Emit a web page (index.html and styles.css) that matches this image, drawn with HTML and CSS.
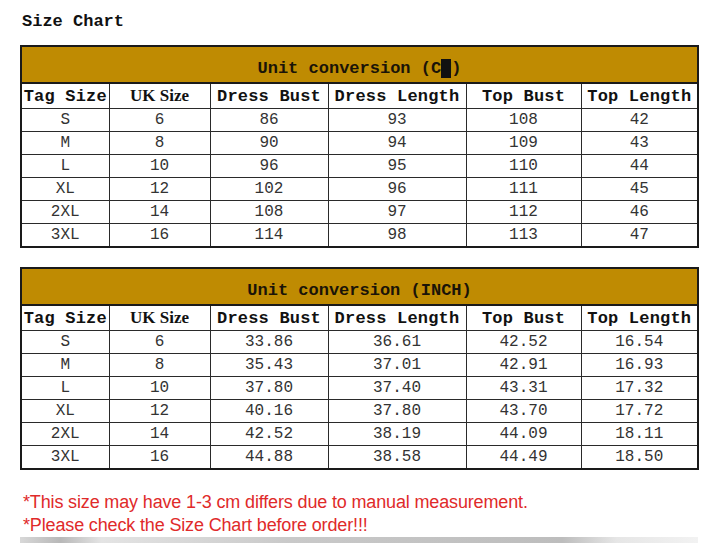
FILE: index.html
```html
<!DOCTYPE html>
<html>
<head>
<meta charset="utf-8">
<link rel="stylesheet" href="styles.css">
</head>
<body>
<div class="page">
  <h1 class="title">Size Chart</h1>

  <table class="chart">
    <colgroup><col class="c1"><col class="c2"><col class="c3"><col class="c4"><col class="c5"><col class="c6"></colgroup>
    <tr class="unit"><th colspan="6">Unit conversion (C<span class="blk">M</span>)</th></tr>
    <tr class="head"><th>Tag Size</th><th class="uk">UK Size</th><th>Dress Bust</th><th>Dress Length</th><th>Top Bust</th><th>Top Length</th></tr>
    <tr><td>S</td><td>6</td><td>86</td><td>93</td><td>108</td><td>42</td></tr>
    <tr><td>M</td><td>8</td><td>90</td><td>94</td><td>109</td><td>43</td></tr>
    <tr><td>L</td><td>10</td><td>96</td><td>95</td><td>110</td><td>44</td></tr>
    <tr><td>XL</td><td>12</td><td>102</td><td>96</td><td>111</td><td>45</td></tr>
    <tr><td>2XL</td><td>14</td><td>108</td><td>97</td><td>112</td><td>46</td></tr>
    <tr><td>3XL</td><td>16</td><td>114</td><td>98</td><td>113</td><td>47</td></tr>
  </table>

  <table class="chart second">
    <colgroup><col class="c1"><col class="c2"><col class="c3"><col class="c4"><col class="c5"><col class="c6"></colgroup>
    <tr class="unit"><th colspan="6">Unit conversion (INCH)</th></tr>
    <tr class="head"><th>Tag Size</th><th class="uk">UK Size</th><th>Dress Bust</th><th>Dress Length</th><th>Top Bust</th><th>Top Length</th></tr>
    <tr><td>S</td><td>6</td><td>33.86</td><td>36.61</td><td>42.52</td><td>16.54</td></tr>
    <tr><td>M</td><td>8</td><td>35.43</td><td>37.01</td><td>42.91</td><td>16.93</td></tr>
    <tr><td>L</td><td>10</td><td>37.80</td><td>37.40</td><td>43.31</td><td>17.32</td></tr>
    <tr><td>XL</td><td>12</td><td>40.16</td><td>37.80</td><td>43.70</td><td>17.72</td></tr>
    <tr><td>2XL</td><td>14</td><td>42.52</td><td>38.19</td><td>44.09</td><td>18.11</td></tr>
    <tr><td>3XL</td><td>16</td><td>44.88</td><td>38.58</td><td>44.49</td><td>18.50</td></tr>
  </table>

  <div class="notes">
    <p>*This size may have 1-3 cm differs due to manual measurement.</p>
    <p>*Please check the Size Chart before order!!!</p>
  </div>
  <div class="photo"></div>
</div>
</body>
</html>
```

FILE: styles.css
```css
html, body {
  margin: 0;
  padding: 0;
  background: #fff;
  overflow: hidden;
}
.page {
  width: 720px;
  height: 543px;
  padding: 12px 0 0 20px;
  box-sizing: border-box;
  display: flex;
  flex-direction: column;
  align-items: flex-start;
  overflow: hidden;
}
.page > * {
  flex-shrink: 0;
}
.title {
  margin: 0 0 0 2px;
  font-family: "Liberation Mono", "DejaVu Sans Mono", monospace;
  font-weight: bold;
  font-size: 17px;
  line-height: 20px;
  color: #111;
  height: 33px;
}
.chart {
  border-collapse: collapse;
  table-layout: fixed;
  width: 677px;
  border: 2px solid #1a1a1a;
  font-family: "Liberation Mono", "DejaVu Sans Mono", monospace;
  color: #222;
}
.chart.second {
  margin-top: 19px;
}
.c1 { width: 88px; }
.c2 { width: 101px; }
.c3 { width: 118px; }
.c4 { width: 138px; }
.c5 { width: 115px; }
.c6 { width: 117px; }
.chart th, .chart td {
  border: 1px solid #2a2a2a;
  padding: 0;
  text-align: center;
  white-space: nowrap;
}
.unit th {
  background: #bf8b02;
  height: 37px;
  font-size: 17px;
  font-weight: bold;
  color: #1a1408;
  border-bottom: 2px solid #1a1a1a;
  padding-top: 7px;
  box-sizing: border-box;
}
.blk {
  background: #111;
  color: #111;
}
.head th {
  height: 24px;
  font-size: 17px;
  font-weight: bold;
  color: #111;
  letter-spacing: 0.2px;
}
.head th.uk {
  font-family: "Liberation Serif", serif;
  font-size: 17px;
  font-weight: bold;
  letter-spacing: 0;
}
.chart td {
  height: 22px;
  font-size: 16px;
  line-height: 20px;
  color: #333;
}
.notes {
  margin-top: 21px;
  margin-left: 3px;
  font-family: "Liberation Sans", Arial, sans-serif;
  font-size: 18px;
  line-height: 23px;
  color: #e02a2a;
  letter-spacing: -0.15px;
}
.notes p {
  margin: 0;
}
.photo {
  margin-top: 0;
  width: 678px;
  height: 12px;
  background: linear-gradient(90deg, #d8d8d8 0%, #b8b8b8 6%, #e4e4e4 12%, #c9c9c9 40%, #bdbdbd 80%, #e6e6e6 88%, #f2f2f2 100%);
}
```
